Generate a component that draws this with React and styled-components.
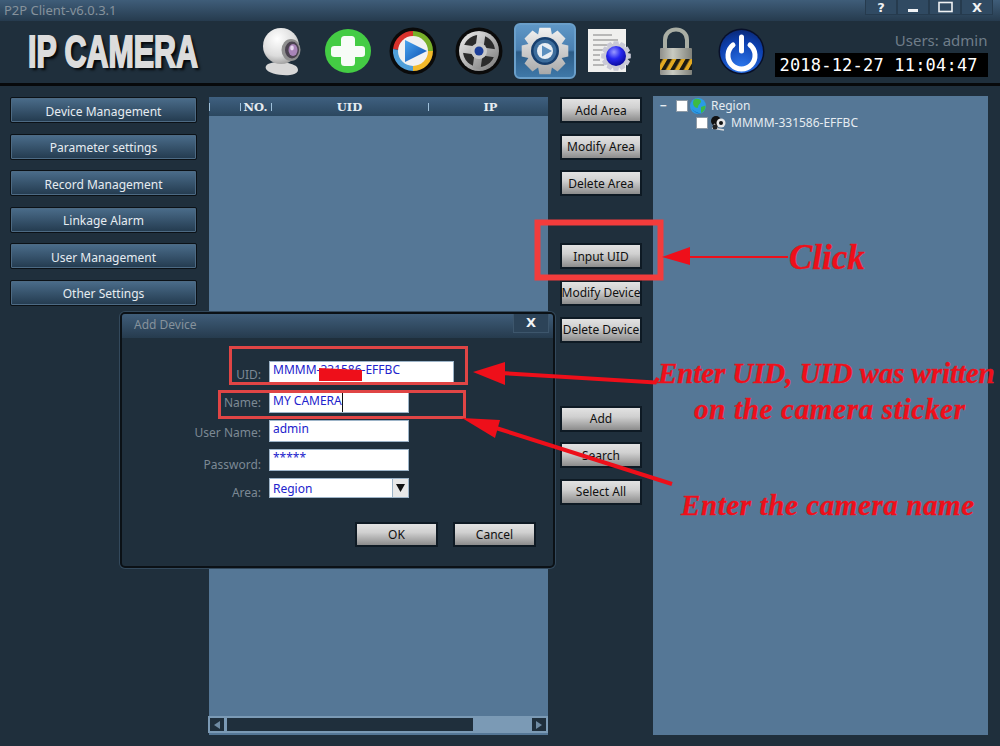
import React from "react";
import styled, { createGlobalStyle } from "styled-components";

const GlobalStyle = createGlobalStyle`
  html, body {
    margin: 0;
    padding: 0;
    background: #1f2f3c;
  }
  * {
    box-sizing: border-box;
  }
`;

const Page = styled.div`
  position: relative;
  width: 1000px;
  height: 746px;
  overflow: hidden;
  display: flex;
  flex-direction: column;
  background: #1f2f3c;
  font-family: "Noto Sans", sans-serif;
  font-size: 12px;
`;

const TitleBar = styled.div`
  height: 21px;
  display: flex;
  justify-content: space-between;
  background: linear-gradient(#3f5d79, #263b4e);
  color: #86929c;
  font-size: 13px;
  padding-left: 4px;
  line-height: 21px;
`;

const WindowButtons = styled.div`
  display: flex;
  height: 15px;
  margin-right: 7px;
`;

const WindowButton = styled.div`
  width: 32px;
  height: 15px;
  display: flex;
  align-items: center;
  justify-content: center;
  background: #304a62;
  border: 1px solid #263b4e;
  border-top: 0;
  color: #f0f2f4;
  font-family: "DejaVu Sans", sans-serif;
  font-weight: bold;
  font-size: 13px;
  line-height: 15px;
`;

const Header = styled.div`
  height: 65px;
  display: flex;
  align-items: center;
  border-bottom: 3px solid #07090b;
`;

const LogoBox = styled.div`
  width: 249px;
  height: 62px;
  padding-left: 28px;
  display: flex;
  align-items: center;
`;

const Logo = styled.div`
  font-family: "Liberation Sans", sans-serif;
  font-weight: bold;
  font-size: 44px;
  line-height: 50px;
  white-space: nowrap;
  color: #dcdcdc;
  -webkit-text-stroke: 2px #dcdcdc;
  text-shadow: 4px 3px 3px #05080a;
  transform: scaleX(0.69);
  transform-origin: left center;
`;

const Tools = styled.div`
  display: flex;
  padding-bottom: 2px;
`;

const Tool = styled.div`
  flex: 0 0 65.7px;
  height: 56px;
  display: flex;
  align-items: center;
  justify-content: center;
`;

const ActiveFrame = styled.div`
  width: 62px;
  height: 56px;
  display: flex;
  align-items: center;
  justify-content: center;
  border: 2px solid #6a9fca;
  border-radius: 6px;
  background: linear-gradient(#5f97c6 0%, #4a7fb0 48%, #2c5c87 52%, #3f78a8 100%);
`;

const Status = styled.div`
  width: 213px;
  text-align: right;
  padding-bottom: 2px;
`;

const Users = styled.div`
  color: #6f7d89;
  font-size: 15px;
  line-height: 18px;
  margin-bottom: 4px;
  margin-top: 6px;
`;

const Clock = styled.div`
  height: 24px;
  background: #000;
  color: #fff;
  font-family: "DejaVu Sans Mono", monospace;
  font-size: 17px;
  letter-spacing: 0.2px;
  line-height: 24px;
  white-space: pre;
  text-align: left;
  padding-left: 5px;
`;

const Body = styled.div`
  flex: 1;
  display: flex;
  padding: 11px 12px 11px 10px;
  min-height: 0;
`;

const NavColumn = styled.div`
  width: 187px;
  margin-right: 12px;
  display: flex;
  flex-direction: column;
  gap: 10.6px;
`;

const NavButton = styled.div`
  height: 26px;
  padding-top: 2px;
  border: 1px solid #0b1116;
  border-radius: 2px;
  box-shadow: inset 0 0 0 1px #4d6a83;
  background: linear-gradient(#4b6d8b, #233a4e);
  color: #e6ecf1;
  display: flex;
  align-items: center;
  justify-content: center;
`;

const TablePanel = styled.div`
  width: 339px;
  background: #557796;
  display: flex;
  flex-direction: column;
  justify-content: space-between;
  padding-bottom: 2px;
`;

const TableHead = styled.div`
  height: 19px;
  display: grid;
  grid-template-columns: 31px 31px 157px 1fr;
  background: linear-gradient(#3f6080, #2b475f);
`;

const HeadCell = styled.div`
  display: flex;
  align-items: center;
  justify-content: center;
  padding-left: ${(p) => p.$shift || 0}px;
  color: #e6ecf1;
  font-family: "DejaVu Serif", serif;
  font-weight: bold;
  font-size: 11.5px;
  position: relative;
  &::before {
    content: "";
    position: absolute;
    left: 0;
    top: 6px;
    height: 8px;
    width: 1px;
    background: #9fc0da;
  }
`;

const ScrollBar = styled.div`
  height: 17px;
  display: flex;
  align-items: stretch;
  gap: 3px;
  margin-left: -1px;
  padding: 2px;
  background: #7b9ab5;
`;

const ScrollArrow = styled.div`
  width: 14px;
  background: #1f2f3c;
  display: flex;
  align-items: center;
  justify-content: center;
`;

const ScrollTrack = styled.div`
  flex: 1;
`;

const ScrollThumb = styled.div`
  height: 100%;
  background: #1f2f3c;
  width: 246px;
`;

const ActionColumn = styled.div`
  width: 82px;
  margin: 0 11px 0 12px;
  display: flex;
  flex-direction: column;
  gap: 10.6px;
`;

const GreyButton = styled.div`
  height: 26px;
  flex-shrink: 0;
  margin-top: ${(p) => p.$offset || 0}px;
  border: 2px solid #0e1a24;
  background: linear-gradient(#e2e2e2, #d0d0d0 40%, #8c8c8c);
  color: #101010;
  display: flex;
  align-items: center;
  justify-content: center;
  white-space: nowrap;
`;

const TreePanel = styled.div`
  flex: 1;
  margin-top: -1px;
  background: #557796;
  color: #e6ecf1;
  padding-top: 1px;
`;

const TreeRow = styled.div`
  height: 17px;
  display: flex;
  align-items: center;
  padding-left: ${(p) => p.$indent}px;
`;

const Toggle = styled.span`
  width: 16px;
  color: #e6ecf1;
  font-weight: bold;
  margin-left: -16px;
`;

const CheckBox = styled.span`
  width: 12px;
  height: 12px;
  background: #fff;
  border: 1px solid #8d9aa6;
  margin-right: 2px;
`;

const TreeLabel = styled.span`
  margin-left: 5px;
`;

/* dialog floats over the table */
const Dialog = styled.div`
  position: absolute;
  left: 120px;
  top: 312px;
  width: 435px;
  height: 256px;
  background: #1f2f3c;
  border: 2px solid #0b1116;
  border-radius: 5px;
  box-shadow: 0 0 0 1px #33495c;
  display: flex;
  flex-direction: column;
`;

const DialogTitle = styled.div`
  height: 24px;
  background: linear-gradient(#3f5d79, #263b4e);
  color: #86929c;
  padding-left: 12px;
  line-height: 22px;
  display: flex;
  justify-content: space-between;
  border-radius: 3px 3px 0 0;
`;

const DialogClose = styled.div`
  width: 36px;
  height: 19px;
  margin-right: 4px;
  background: #2c4358;
  border: 1px solid #3d566c;
  border-top: 0;
  color: #f2f4f6;
  font-family: "DejaVu Sans", sans-serif;
  font-weight: bold;
  font-size: 13px;
  line-height: 17px;
  text-align: center;
`;

const Form = styled.div`
  flex: 1;
  padding-top: 23px;
  display: flex;
  flex-direction: column;
`;

const FormRow = styled.div`
  display: flex;
  align-items: flex-start;
  height: ${(p) => p.$height}px;
  margin-bottom: ${(p) => p.$after}px;
`;

const FieldLabel = styled.div`
  width: 139px;
  text-align: right;
  color: #7c8994;
  line-height: 14px;
  padding-top: ${(p) => p.$drop}px;
`;

const Field = styled.div`
  margin-left: 8px;
  width: ${(p) => p.$width}px;
  height: 100%;
  background: #fff;
  border: 1px solid #9db4c8;
  color: #2222cc;
  padding: ${(p) => p.$textTop || 0}px 0 0 3px;
  line-height: 16px;
  display: flex;
  justify-content: space-between;
  white-space: nowrap;
`;

const Caret = styled.span`
  border-right: 1px solid #111;
`;

const DropArrow = styled.div`
  width: 16px;
  height: 18px;
  margin-top: -2px;
  background: #e8e8e8;
  border-left: 1px solid #9db4c8;
  display: flex;
  align-items: center;
  justify-content: center;
`;

const DialogActions = styled.div`
  display: flex;
  gap: 15px;
  padding-left: 233px;
  margin-top: 24px;
`;

const DialogButton = styled(GreyButton)`
  width: 83px;
  height: 25px;
`;

/* hand-drawn notes placed on top of the screenshot */
const MarkupLayer = styled.svg`
  position: absolute;
  left: 0;
  top: 0;
  pointer-events: none;
`;

const Note = styled.div`
  position: absolute;
  left: ${(p) => p.$x}px;
  top: ${(p) => p.$y}px;
  color: #ee0f1a;
  font-family: "Liberation Serif", serif;
  font-weight: bold;
  font-style: italic;
  font-size: ${(p) => p.$size || 29}px;
  letter-spacing: ${(p) => p.$spacing || 0}px;
  -webkit-text-stroke: 0.3px #ee0f1a;
  line-height: 34px;
  white-space: nowrap;
`;

const gearPath = (cx, cy, outer, inner, teeth) => {
  const pts = [];
  const step = (Math.PI * 2) / teeth;
  for (let i = 0; i < teeth; i++) {
    const a = i * step - Math.PI / 2;
    [
      [inner, -0.5],
      [outer, -0.3],
      [outer, 0.3],
      [inner, 0.5],
    ].forEach(([r, o]) => {
      const t = a + o * step;
      pts.push(`${(cx + r * Math.cos(t)).toFixed(1)} ${(cy + r * Math.sin(t)).toFixed(1)}`);
    });
  }
  return `M${pts.join("L")}Z`;
};

const WebcamIcon = () => (
  <svg width="44" height="50" viewBox="0 0 44 50">
    <defs>
      <radialGradient id="camBody" cx="0.4" cy="0.3" r="0.8">
        <stop offset="0" stopColor="#ffffff" />
        <stop offset="0.6" stopColor="#dcdcdc" />
        <stop offset="1" stopColor="#8d8d8d" />
      </radialGradient>
    </defs>
    <path d="M8 38C14 35 28 35 36 40C40 44 38 48 30 49C20 50 8 47 6 43C5 41 6 39 8 38Z" fill="#d8d8d8" />
    <circle cx="21" cy="20" r="18" fill="url(#camBody)" />
    <ellipse cx="31" cy="24" rx="9.5" ry="11" fill="#8f8f8f" />
    <ellipse cx="32" cy="24" rx="7" ry="8.5" fill="#4b4350" />
    <ellipse cx="33" cy="24" rx="4.5" ry="6" fill="#a884b8" />
    <ellipse cx="32" cy="22" rx="1.8" ry="2.4" fill="#e6d8ee" />
  </svg>
);

const PlusIcon = () => (
  <svg width="46" height="44" viewBox="0 0 46 44">
    <ellipse cx="23" cy="22" rx="23" ry="22" fill="#44cc44" />
    <path d="M19.5 7H26.5Q30 7 30 10.5V17H36.5Q40 17 40 20V25Q40 28 36.5 28H30V33.5Q30 37 26.5 37H19.5Q16 37 16 33.5V28H9.5Q6 28 6 25V20Q6 17 9.5 17H16V10.5Q16 7 19.5 7Z" fill="#f7fcf7" />
  </svg>
);

const MediaIcon = () => (
  <svg width="48" height="48" viewBox="0 0 48 48">
    <defs>
      <linearGradient id="arrowBlue" x1="0" y1="0" x2="1" y2="1">
        <stop offset="0" stopColor="#4aa4ef" />
        <stop offset="1" stopColor="#0b4fb0" />
      </linearGradient>
    </defs>
    <circle cx="24" cy="24" r="23.5" fill="#0a0a0a" />
    <path d="M4 22A20 20 0 0 1 24 4L24 10A14 14 0 0 0 10 23Z" fill="#d8322c" />
    <path d="M24 4A20 20 0 0 1 44 24L38 24A14 14 0 0 0 24 10Z" fill="#78b02a" />
    <path d="M44 24A20 20 0 0 1 24 44L24 38A14 14 0 0 0 38 24Z" fill="#f2b92a" />
    <path d="M24 44A20 20 0 0 1 4 22L10 23A14 14 0 0 0 24 38Z" fill="#4f9fd8" />
    <circle cx="24" cy="24" r="15" fill="#f1f1f1" />
    <path d="M16 13L38 24L16 35Z" fill="url(#arrowBlue)" />
  </svg>
);

const ReelIcon = () => (
  <svg width="48" height="48" viewBox="0 0 48 48">
    <defs>
      <linearGradient id="reelMetal" x1="0" y1="0" x2="1" y2="1">
        <stop offset="0" stopColor="#f0f0f0" />
        <stop offset="1" stopColor="#777" />
      </linearGradient>
    </defs>
    <circle cx="24" cy="24" r="23.5" fill="#0a0a0a" />
    <circle cx="24" cy="24" r="20" fill="url(#reelMetal)" />
    <circle cx="24" cy="24" r="16" fill="#2b2b2b" />
    <path d="M20 6H28V42H20ZM6 20H42V28H6Z" fill="url(#reelMetal)" transform="rotate(8 24 24)" />
    <circle cx="24" cy="24" r="8" fill="#c9c9c9" />
    <circle cx="24" cy="24" r="4.5" fill="#1d3f9a" />
  </svg>
);

const GearPlayIcon = () => (
  <svg width="48" height="48" viewBox="0 0 48 48">
    <defs>
      <linearGradient id="gearMetal" x1="0" y1="0" x2="0" y2="1">
        <stop offset="0" stopColor="#f2f2f2" />
        <stop offset="1" stopColor="#a8a8a8" />
      </linearGradient>
    </defs>
    <path d={gearPath(24, 24, 24, 18, 8)} fill="url(#gearMetal)" />
    <circle cx="24" cy="24" r="14" fill="#173f6e" />
    <circle cx="24" cy="24" r="11.5" fill="#3d6d9c" />
    <circle cx="24" cy="24" r="8" fill="#e8eef4" />
    <path d="M21 18.5L31 24L21 29.5Z" fill="#5c90bf" />
  </svg>
);

const ReportIcon = () => (
  <svg width="44" height="44" viewBox="0 0 44 44">
    <defs>
      <radialGradient id="orb" cx="0.4" cy="0.3" r="0.7">
        <stop offset="0" stopColor="#9a9aff" />
        <stop offset="0.5" stopColor="#2626f0" />
        <stop offset="1" stopColor="#0a0aa0" />
      </radialGradient>
    </defs>
    <rect x="0" y="0" width="38" height="43" fill="#f0f0ee" />
    <path d="M5 6H24M5 11H30M5 16H28M5 21H18M5 26H12M5 31H12M5 36H16" stroke="#a5a5a5" strokeWidth="1.3" />
    <path d={gearPath(28, 27, 15, 12, 12)} fill="#c9c9d6" />
    <circle cx="28" cy="27" r="10" fill="url(#orb)" />
  </svg>
);

const LockIcon = () => (
  <svg width="34" height="48" viewBox="0 0 34 48">
    <defs>
      <linearGradient id="lockBody" x1="0" y1="0" x2="1" y2="0">
        <stop offset="0" stopColor="#8f8f8a" />
        <stop offset="0.4" stopColor="#c9cbc2" />
        <stop offset="1" stopColor="#7f817a" />
      </linearGradient>
      <pattern id="hazard" width="9" height="12" patternUnits="userSpaceOnUse" patternTransform="skewX(-30)">
        <rect width="9" height="12" fill="#e2aa22" />
        <rect width="4.5" height="12" fill="#1b1b14" />
      </pattern>
    </defs>
    <path d="M6 22V13C6 -1 28 -1 28 13V22" fill="none" stroke="#a9aea4" strokeWidth="4" />
    <rect x="1" y="21" width="32" height="27" rx="1" fill="url(#lockBody)" />
    <rect x="1" y="32" width="32" height="11" fill="url(#hazard)" />
  </svg>
);

const PowerIcon = () => (
  <svg width="47" height="47" viewBox="0 0 47 47">
    <defs>
      <radialGradient id="powerBlue" cx="0.5" cy="0.9" r="0.9">
        <stop offset="0" stopColor="#2f7bf0" />
        <stop offset="0.7" stopColor="#0c3fae" />
        <stop offset="1" stopColor="#0a2a7a" />
      </radialGradient>
    </defs>
    <circle cx="23.5" cy="23.5" r="23" fill="#08102a" />
    <circle cx="23.5" cy="23.5" r="21.5" fill="url(#powerBlue)" />
    <path d="M15 17A13.5 13.5 0 1 0 32 17" fill="none" stroke="#fff" strokeWidth="5" strokeLinecap="round" />
    <path d="M23.5 9V23" fill="none" stroke="#fff" strokeWidth="5" strokeLinecap="round" />
  </svg>
);

const GlobeIcon = () => (
  <svg width="16" height="16" viewBox="0 0 16 16">
    <circle cx="8" cy="8" r="8" fill="#2b9be6" />
    <path d="M4 1.5C7 0 10 1 11 3C11 6 8 6 8 9.5C6 11 1 7 4 1.5ZM11 9L15.5 7.5C15.8 11 13.5 14 11 15Z" fill="#3dbb45" />
    <path d="M2 11C4 14 8 16 11 15.5C8 15 5 14 2 11Z" fill="#0d5aa8" />
  </svg>
);

const CameraGlyph = () => (
  <svg width="16" height="16" viewBox="0 0 16 16">
    <circle cx="6" cy="6" r="5" fill="#111" />
    <circle cx="11" cy="8" r="4.5" fill="#e8e8e8" />
    <circle cx="11" cy="8" r="2" fill="#111" />
    <path d="M2 13L14 15M4 9L8 14" stroke="#ddd" strokeWidth="1.5" />
    <circle cx="5" cy="12" r="2.5" fill="#222" />
  </svg>
);

const Triangle = ({ dir, color }) => (
  <svg width="8" height="10" viewBox="0 0 8 10">
    <path d={dir === "left" ? "M7 1V9L1 5Z" : "M1 1V9L7 5Z"} fill={color} />
  </svg>
);

const navItems = [
  "Device Management",
  "Parameter settings",
  "Record Management",
  "Linkage Alarm",
  "User Management",
  "Other Settings",
];

const actions = [
  { label: "Add Area" },
  { label: "Modify Area" },
  { label: "Delete Area" },
  { label: "Input UID", offset: 36.6 },
  { label: "Modify Device" },
  { label: "Delete Device" },
  { label: "Add", offset: 52.4 },
  { label: "Search" },
  { label: "Select All" },
];

const App = () => {
  return (
    <Page>
      <GlobalStyle />
      <TitleBar>
        <span>P2P Client-v6.0.3.1</span>
        <WindowButtons>
          <WindowButton>?</WindowButton>
          <WindowButton>
            <svg width="12" height="12" viewBox="0 0 12 12">
              <rect x="1" y="8" width="10" height="3" fill="#f0f2f4" />
            </svg>
          </WindowButton>
          <WindowButton>
            <svg width="15" height="12" viewBox="0 0 15 12">
              <rect x="1" y="1.5" width="13" height="9" fill="none" stroke="#f0f2f4" strokeWidth="1.6" />
            </svg>
          </WindowButton>
          <WindowButton>X</WindowButton>
        </WindowButtons>
      </TitleBar>

      <Header>
        <LogoBox>
          <Logo>IP CAMERA</Logo>
        </LogoBox>
        <Tools>
          <Tool><WebcamIcon /></Tool>
          <Tool><PlusIcon /></Tool>
          <Tool><MediaIcon /></Tool>
          <Tool><ReelIcon /></Tool>
          <Tool><ActiveFrame><GearPlayIcon /></ActiveFrame></Tool>
          <Tool><ReportIcon /></Tool>
          <Tool><LockIcon /></Tool>
          <Tool><PowerIcon /></Tool>
        </Tools>
        <Status>
          <Users>Users: admin</Users>
          <Clock>2018-12-27 11:04:47</Clock>
        </Status>
      </Header>

      <Body>
        <NavColumn>
          {navItems.map((item) => (
            <NavButton key={item}>{item}</NavButton>
          ))}
        </NavColumn>

        <TablePanel>
          <TableHead>
            <HeadCell />
            <HeadCell>NO.</HeadCell>
            <HeadCell>UID</HeadCell>
            <HeadCell $shift={5}>IP</HeadCell>
          </TableHead>
          <ScrollBar>
            <ScrollArrow><Triangle dir="left" color="#6f8ba3" /></ScrollArrow>
            <ScrollTrack><ScrollThumb /></ScrollTrack>
            <ScrollArrow><Triangle dir="right" color="#6f8ba3" /></ScrollArrow>
          </ScrollBar>
        </TablePanel>

        <ActionColumn>
          {actions.map((a) => (
            <GreyButton key={a.label} $offset={a.offset}>{a.label}</GreyButton>
          ))}
        </ActionColumn>

        <TreePanel>
          <TreeRow $indent={23}>
            <Toggle>−</Toggle>
            <CheckBox />
            <GlobeIcon />
            <TreeLabel>Region</TreeLabel>
          </TreeRow>
          <TreeRow $indent={43}>
            <CheckBox />
            <CameraGlyph />
            <TreeLabel>MMMM-331586-EFFBC</TreeLabel>
          </TreeRow>
        </TreePanel>
      </Body>

      <Dialog>
        <DialogTitle>
          <span>Add Device</span>
          <DialogClose>X</DialogClose>
        </DialogTitle>
        <Form>
          <FormRow $height={22} $after={9}>
            <FieldLabel $drop={7}>UID:</FieldLabel>
            <Field $width={185} $textTop={0}>MMMM-331586-EFFBC</Field>
          </FormRow>
          <FormRow $height={21} $after={7}>
            <FieldLabel $drop={4}>Name:</FieldLabel>
            <Field $width={140} $textTop={0}><Caret>MY CAMERA</Caret></Field>
          </FormRow>
          <FormRow $height={22} $after={7}>
            <FieldLabel $drop={6}>User Name:</FieldLabel>
            <Field $width={140} $textTop={0}>admin</Field>
          </FormRow>
          <FormRow $height={22} $after={7}>
            <FieldLabel $drop={9}>Password:</FieldLabel>
            <Field $width={140} $textTop={0}>*****</Field>
          </FormRow>
          <FormRow $height={20} $after={0}>
            <FieldLabel $drop={8}>Area:</FieldLabel>
            <Field $width={140} $textTop={2}>
              Region
              <DropArrow>
                <svg width="9" height="8" viewBox="0 0 9 8">
                  <path d="M0 0H9L4.5 8Z" fill="#111" />
                </svg>
              </DropArrow>
            </Field>
          </FormRow>
          <DialogActions>
            <DialogButton>OK</DialogButton>
            <DialogButton>Cancel</DialogButton>
          </DialogActions>
        </Form>
      </Dialog>

      <MarkupLayer width="1000" height="746" viewBox="0 0 1000 746">
        <rect x="537.5" y="222.5" width="123" height="55" fill="none" stroke="#f23c3c" strokeWidth="6" />
        <rect x="230.5" y="347.5" width="236" height="36" fill="none" stroke="#e04545" strokeWidth="3" />
        <rect x="219.5" y="391.5" width="245" height="26" fill="none" stroke="#e04545" strokeWidth="3" />
        <path d="M319 368L362 370V381H319Z" fill="#ee0f1a" />
        <path d="M788 257H688" stroke="#ee0f1a" strokeWidth="2" />
        <path d="M662 257L690 247V265Z" fill="#ee0f1a" />
        <path d="M500 373L655 382.5L658 378" fill="none" stroke="#ee0f1a" strokeWidth="4" />
        <path d="M473 372L505 362V385Z" fill="#ee0f1a" />
        <path d="M496 428L672 484" stroke="#ee0f1a" strokeWidth="4" />
        <path d="M462 418L500 420L495 438Z" fill="#ee0f1a" />
      </MarkupLayer>

      <Note $x={789} $y={241} $size={35}>Click</Note>
      <Note $x={658} $y={356} $spacing={-0.1}>Enter UID, UID was written</Note>
      <Note $x={694} $y={392} $spacing={0.7}>on the camera sticker</Note>
      <Note $x={681} $y={488} $spacing={0.6}>Enter the camera name</Note>
    </Page>
  );
};

export default App;
